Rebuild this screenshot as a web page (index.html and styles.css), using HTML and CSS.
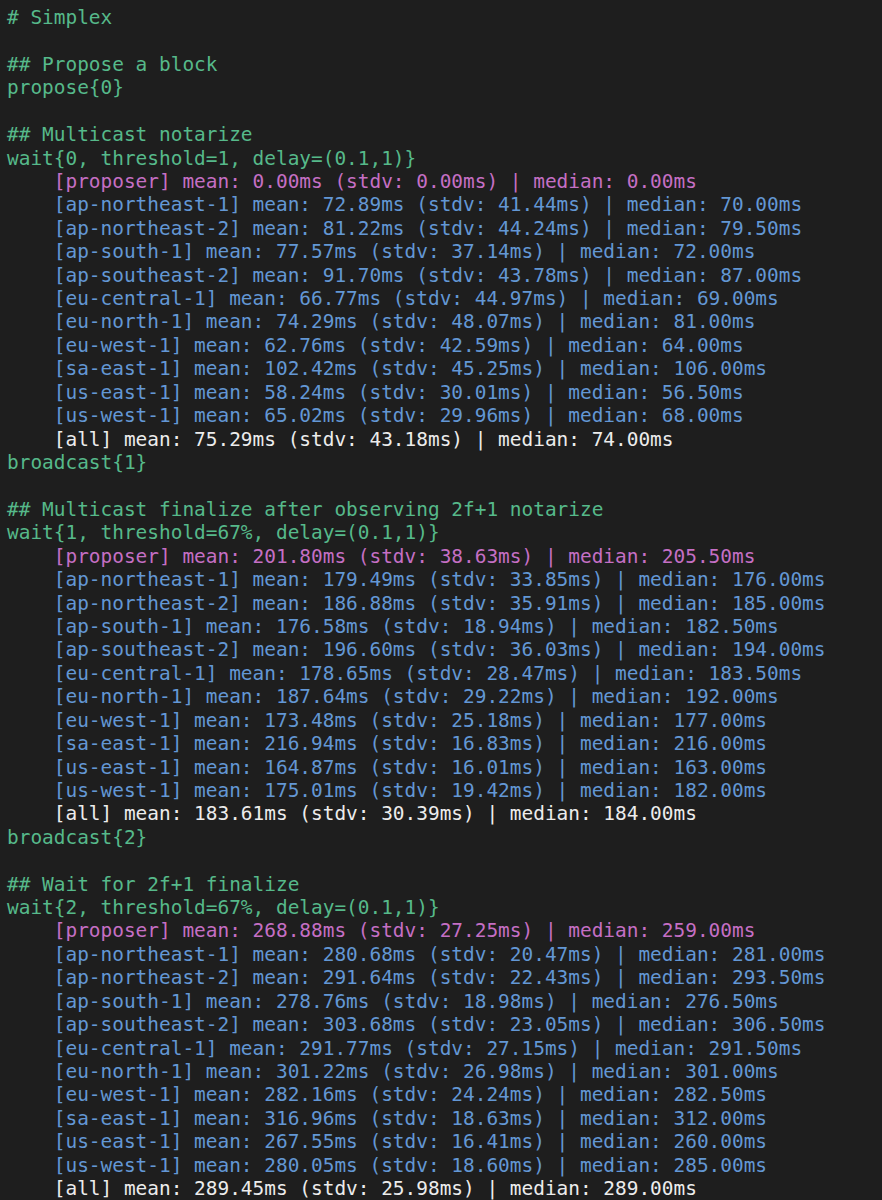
FILE: index.html
```html
<!DOCTYPE html>
<html>
<head>
<meta charset="utf-8">
<link rel="stylesheet" href="styles.css">
</head>
<body>
<pre class="term"><span class="g"># Simplex</span>

<span class="g">## Propose a block</span>
<span class="g">propose{0}</span>

<span class="g">## Multicast notarize</span>
<span class="g">wait{0, threshold=1, delay=(0.1,1)}</span>
<span class="p">    [proposer] mean: 0.00ms (stdv: 0.00ms) | median: 0.00ms</span>
<span class="b">    [ap-northeast-1] mean: 72.89ms (stdv: 41.44ms) | median: 70.00ms</span>
<span class="b">    [ap-northeast-2] mean: 81.22ms (stdv: 44.24ms) | median: 79.50ms</span>
<span class="b">    [ap-south-1] mean: 77.57ms (stdv: 37.14ms) | median: 72.00ms</span>
<span class="b">    [ap-southeast-2] mean: 91.70ms (stdv: 43.78ms) | median: 87.00ms</span>
<span class="b">    [eu-central-1] mean: 66.77ms (stdv: 44.97ms) | median: 69.00ms</span>
<span class="b">    [eu-north-1] mean: 74.29ms (stdv: 48.07ms) | median: 81.00ms</span>
<span class="b">    [eu-west-1] mean: 62.76ms (stdv: 42.59ms) | median: 64.00ms</span>
<span class="b">    [sa-east-1] mean: 102.42ms (stdv: 45.25ms) | median: 106.00ms</span>
<span class="b">    [us-east-1] mean: 58.24ms (stdv: 30.01ms) | median: 56.50ms</span>
<span class="b">    [us-west-1] mean: 65.02ms (stdv: 29.96ms) | median: 68.00ms</span>
<span class="w">    [all] mean: 75.29ms (stdv: 43.18ms) | median: 74.00ms</span>
<span class="g">broadcast{1}</span>

<span class="g">## Multicast finalize after observing 2f+1 notarize</span>
<span class="g">wait{1, threshold=67%, delay=(0.1,1)}</span>
<span class="p">    [proposer] mean: 201.80ms (stdv: 38.63ms) | median: 205.50ms</span>
<span class="b">    [ap-northeast-1] mean: 179.49ms (stdv: 33.85ms) | median: 176.00ms</span>
<span class="b">    [ap-northeast-2] mean: 186.88ms (stdv: 35.91ms) | median: 185.00ms</span>
<span class="b">    [ap-south-1] mean: 176.58ms (stdv: 18.94ms) | median: 182.50ms</span>
<span class="b">    [ap-southeast-2] mean: 196.60ms (stdv: 36.03ms) | median: 194.00ms</span>
<span class="b">    [eu-central-1] mean: 178.65ms (stdv: 28.47ms) | median: 183.50ms</span>
<span class="b">    [eu-north-1] mean: 187.64ms (stdv: 29.22ms) | median: 192.00ms</span>
<span class="b">    [eu-west-1] mean: 173.48ms (stdv: 25.18ms) | median: 177.00ms</span>
<span class="b">    [sa-east-1] mean: 216.94ms (stdv: 16.83ms) | median: 216.00ms</span>
<span class="b">    [us-east-1] mean: 164.87ms (stdv: 16.01ms) | median: 163.00ms</span>
<span class="b">    [us-west-1] mean: 175.01ms (stdv: 19.42ms) | median: 182.00ms</span>
<span class="w">    [all] mean: 183.61ms (stdv: 30.39ms) | median: 184.00ms</span>
<span class="g">broadcast{2}</span>

<span class="g">## Wait for 2f+1 finalize</span>
<span class="g">wait{2, threshold=67%, delay=(0.1,1)}</span>
<span class="p">    [proposer] mean: 268.88ms (stdv: 27.25ms) | median: 259.00ms</span>
<span class="b">    [ap-northeast-1] mean: 280.68ms (stdv: 20.47ms) | median: 281.00ms</span>
<span class="b">    [ap-northeast-2] mean: 291.64ms (stdv: 22.43ms) | median: 293.50ms</span>
<span class="b">    [ap-south-1] mean: 278.76ms (stdv: 18.98ms) | median: 276.50ms</span>
<span class="b">    [ap-southeast-2] mean: 303.68ms (stdv: 23.05ms) | median: 306.50ms</span>
<span class="b">    [eu-central-1] mean: 291.77ms (stdv: 27.15ms) | median: 291.50ms</span>
<span class="b">    [eu-north-1] mean: 301.22ms (stdv: 26.98ms) | median: 301.00ms</span>
<span class="b">    [eu-west-1] mean: 282.16ms (stdv: 24.24ms) | median: 282.50ms</span>
<span class="b">    [sa-east-1] mean: 316.96ms (stdv: 18.63ms) | median: 312.00ms</span>
<span class="b">    [us-east-1] mean: 267.55ms (stdv: 16.41ms) | median: 260.00ms</span>
<span class="b">    [us-west-1] mean: 280.05ms (stdv: 18.60ms) | median: 285.00ms</span>
<span class="w">    [all] mean: 289.45ms (stdv: 25.98ms) | median: 289.00ms</span></pre>
</body>
</html>
```
FILE: styles.css
```css
html, body {
  margin: 0;
  padding: 0;
  background: #1e1e1e;
  height: 100%;
  overflow: hidden;
}
.term {
  margin: 0;
  padding: 6px 0 0 7px;
  font-family: "DejaVu Sans Mono", "Liberation Mono", monospace;
  font-size: 19.43px;
  line-height: 23.42px;
  color: #e8e8e8;
  white-space: pre;
}
.g { color: #56b98a; }
.p { color: #c56fc4; }
.b { color: #6397d4; }
.w { color: #ececec; }
```
